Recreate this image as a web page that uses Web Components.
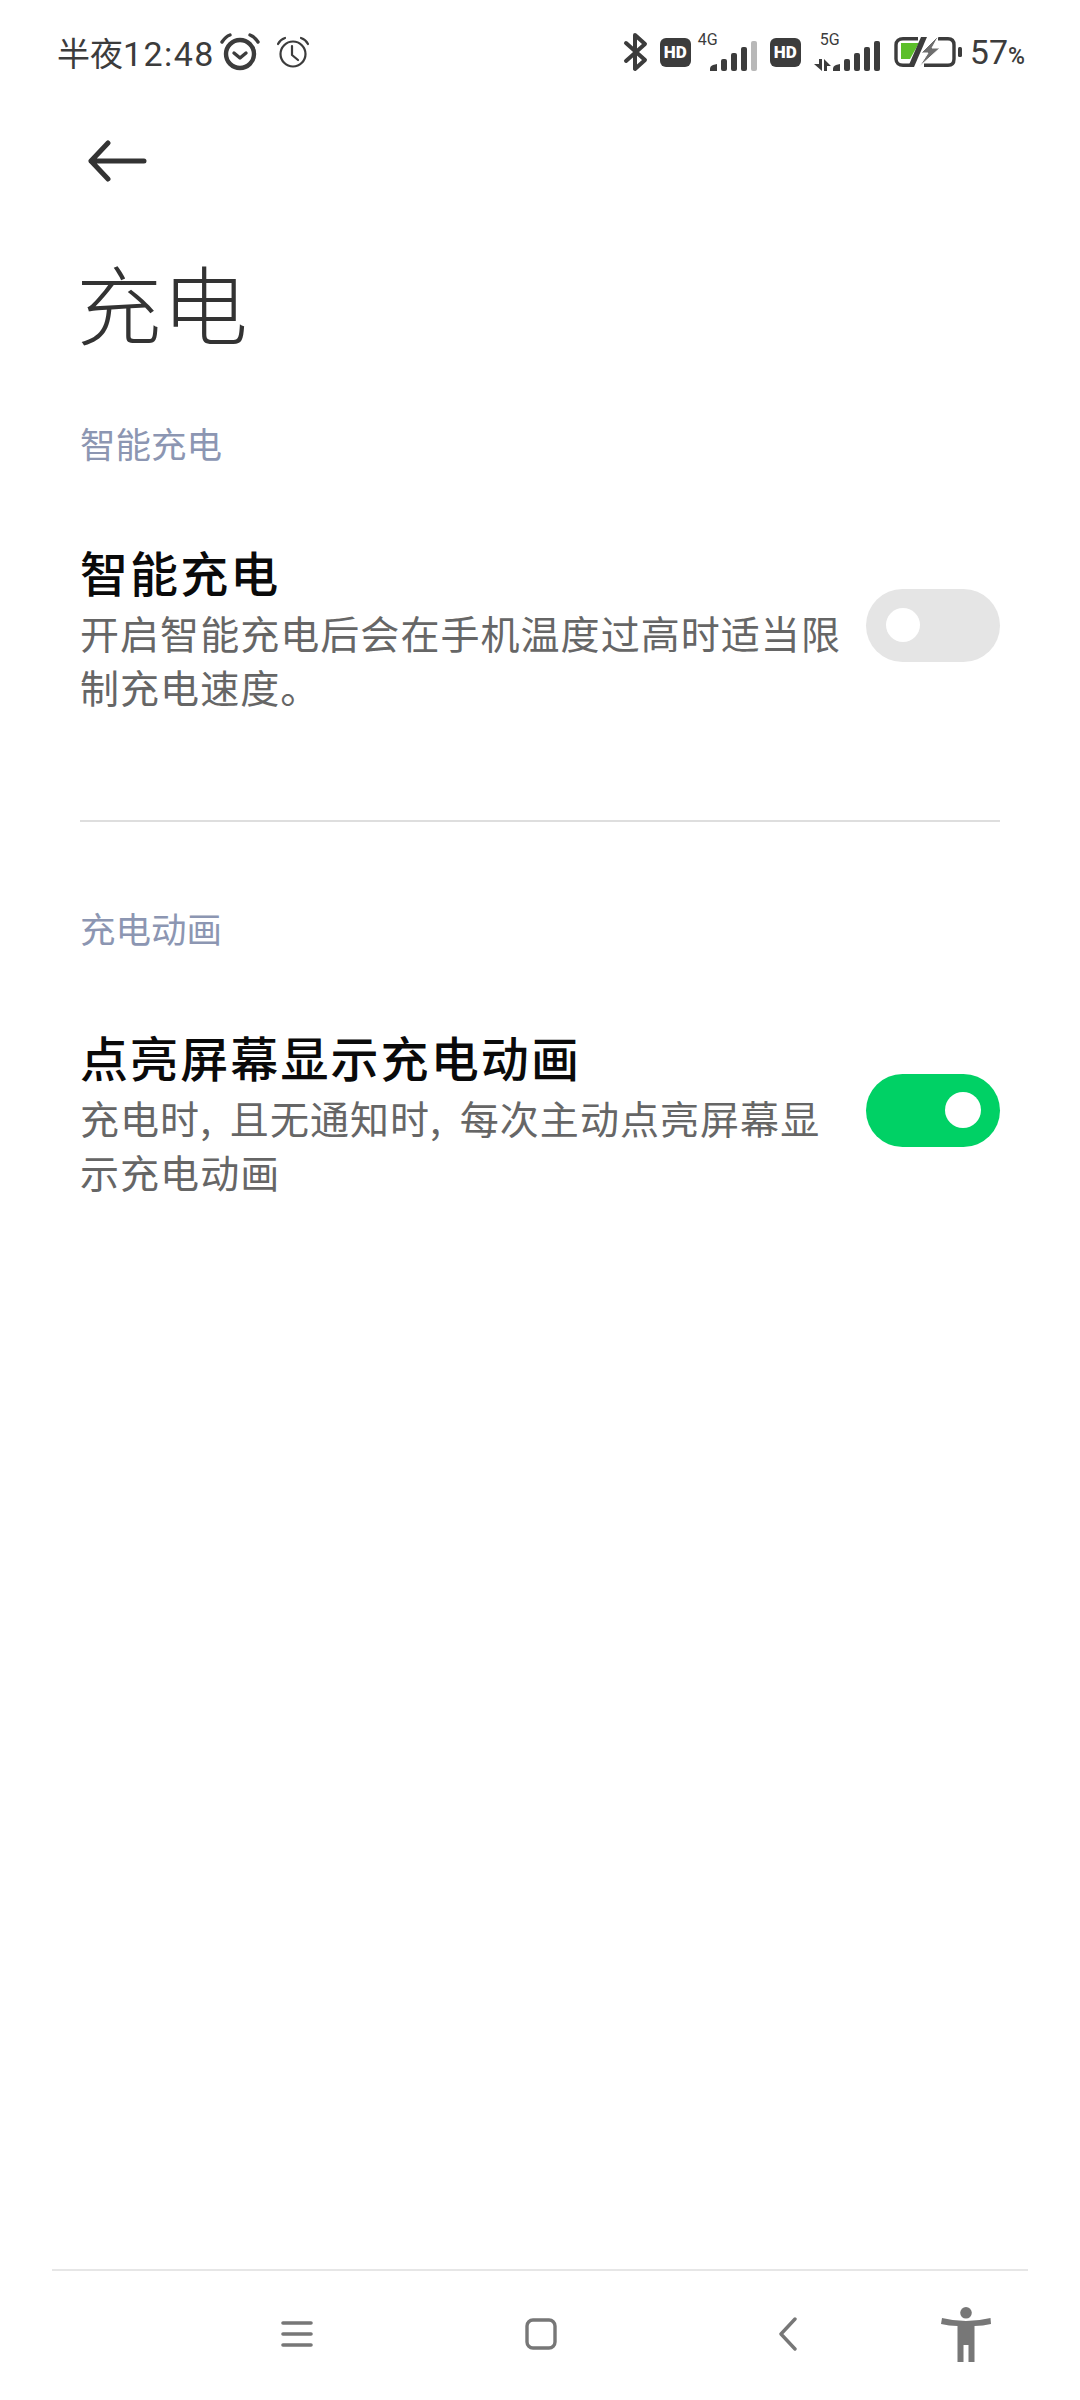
<!DOCTYPE html>
<html>
<head>
<meta charset="utf-8">
<style>
html, body { margin: 0; padding: 0; background: #fff; }
body { width: 1080px; height: 2400px; display: flex; flex-direction: column; font-family: "Noto Sans CJK SC", Roboto, sans-serif; }
</style>
</head>
<body>
<status-bar></status-bar>
<back-header title="充电"></back-header>
<section-title style="margin-top:66px">智能充电</section-title>
<setting-row title="智能充电" style="margin-top:72px">开启智能充电后会在手机温度过高时适当限制充电速度。</setting-row>
<hr-line></hr-line>
<section-title>充电动画</section-title>
<setting-row title="点亮屏幕显示充电动画" checked style="margin-top:72px">充电时, 且无通知时, 每次主动点亮屏幕显示充电动画</setting-row>
<nav-bar></nav-bar>

<script>
class StatusBar extends HTMLElement {
  constructor() {
    super();
    const root = this.attachShadow({ mode: 'open' });
    root.innerHTML = `
<style>
:host { display: flex; align-items: center; height: 104px; padding: 0 55px 0 57px; color: #3c3c3c; box-sizing: border-box; }
.time { font: 400 33px "Noto Sans CJK SC", sans-serif; letter-spacing: 0; }
.time b { font: 400 34px Roboto, sans-serif; letter-spacing: 1.4px; }
svg { display: block; flex: none; }
.left { display: flex; align-items: center; }
.right { display: flex; align-items: center; margin-left: auto; }
.pct { font: 400 34px Roboto, sans-serif; margin-left: 6px; }
.pct small { font-size: 23px; font-weight: 500; }
</style>
<div class="left">
  <span class="time">半夜<b>12:48</b></span>
  <svg width="42" height="40" viewBox="0 0 42 40" style="margin-left:4px" fill="none" stroke="#3c3c3c">
    <circle cx="21" cy="22" r="14" stroke-width="4.4"/>
    <path d="M15 21l6 5 6-5" stroke-width="3.4" stroke-linecap="round" stroke-linejoin="round"/>
    <path d="M3 10C5 7 8 4 11 3M39 10C37 7 34 4 31 3" stroke-width="3.4" stroke-linecap="round"/>
  </svg>
  <svg width="34" height="34" viewBox="0 0 34 34" style="margin-left:15px" fill="none" stroke="#3c3c3c" stroke-width="2.2">
    <circle cx="17" cy="19" r="12.5"/>
    <path d="M16 11v9l6 5" stroke-linecap="round" stroke-linejoin="round"/>
    <path d="M2 9C3 7 6 4 9 3M32 9C31 7 28 4 25 3" stroke-linecap="round"/>
  </svg>
</div>
<div class="right">
  <svg width="26" height="40" viewBox="0 0 26 40" fill="none" stroke="#3c3c3c" stroke-width="4" stroke-linejoin="round" stroke-linecap="round">
    <path d="M3 11L22 28L12 37V3L22 12L3 29"/>
  </svg>
  <hd-badge style="margin-left:11px"></hd-badge>
  <signal-icon label="4G" style="margin-left:7px" last-dim></signal-icon>
  <hd-badge style="margin-left:12px"></hd-badge>
  <signal-icon label="5G" style="margin-left:12px" arrows></signal-icon>
  <svg width="70" height="34" viewBox="0 0 70 34" style="margin-left:13px" fill="none">
    <path d="M24 3.7H9C5 3.7 2 6 2 10V24C2 28 5 30.3 9 30.3H19M44 3.7H54C58 3.7 60 6 60 10V24C60 28 58 30.3 54 30.3H30" stroke="#3c3c3c" stroke-width="3.4"/>
    <path d="M7 8H25L16 24H7Z" fill="#5cbf2a"/>
    <path d="M27 2H33L20 32H14Z" fill="#3c3c3c"/>
    <path d="M43 2L27 18H34L25 32L46 13H38L44 2Z" fill="#6e6e6e" stroke="#fff" stroke-width="1"/>
    <rect x="64" y="12" width="4" height="10" rx="1.5" fill="#3c3c3c"/>
  </svg>
  <span class="pct">57<small>%</small></span>
</div>`;
  }
}

class HdBadge extends HTMLElement {
  constructor() {
    super();
    const root = this.attachShadow({ mode: 'open' });
    root.innerHTML = `
<style>
:host { display: flex; align-items: center; justify-content: center; width: 31px; height: 29px; border-radius: 6px; background: #3c3c3c; color: #fff; font: 900 17px Roboto, sans-serif; }
</style>HD`;
  }
}

class SignalIcon extends HTMLElement {
  constructor() {
    super();
    const root = this.attachShadow({ mode: 'open' });
    const dim = this.hasAttribute('last-dim');
    const arrows = this.hasAttribute('arrows');
    root.innerHTML = `
<style>
:host { display: flex; position: relative; height: 38px; width: ${arrows ? 68 : 60}px; color: #3c3c3c; }
svg { position: absolute; right: 0; bottom: 0; }
span { position: absolute; top: -3px; left: ${arrows ? 7 : 0}px; font: 400 16px Roboto, sans-serif; }
</style>
<span>${this.getAttribute('label')}</span>
<svg width="${arrows ? 68 : 48}" height="30" viewBox="0 0 ${arrows ? 68 : 48} 30" fill="#3c3c3c">
  ${arrows ? '<path d="M6 18h3v12L1 23h5zM11 18l7 7h-4v5h-3z"/>' : ''}
  <g transform="translate(${arrows ? 20 : 0} 0)">
    <path d="M0 28Q0 25 3 24L7 23V30H0Z"/>
    <rect x="11" y="18" width="6" height="12" rx="2"/>
    <rect x="21" y="12" width="6" height="18" rx="2"/>
    <rect x="31" y="6" width="6" height="24" rx="2"/>
    <rect x="41" y="0" width="6" height="30" rx="2" fill="${dim ? '#b8b8b8' : '#3c3c3c'}"/>
  </g>
</svg>`;
  }
}

class BackHeader extends HTMLElement {
  constructor() {
    super();
    const root = this.attachShadow({ mode: 'open' });
    root.innerHTML = `
<style>
:host { display: block; padding: 0 80px; }
svg { display: block; margin-left: 8px; margin-top: 36px; }
h1 { margin: 70px 0 0 -4px; font: 300 86px/100px "Noto Sans CJK SC", sans-serif; color: #333; }
</style>
<svg width="60" height="42" viewBox="0 0 60 42" fill="none" stroke="#333" stroke-width="5" stroke-linecap="round" stroke-linejoin="round">
  <path d="M56 21H3M20 3L3 21L20 39"/>
</svg>
<h1>${this.getAttribute('title')}</h1>`;
  }
}

class SectionTitle extends HTMLElement {
  constructor() {
    super();
    const root = this.attachShadow({ mode: 'open' });
    root.innerHTML = `
<style>
:host { display: block; padding: 0 80px; font: 400 35.5px/50px "Noto Sans CJK SC", sans-serif; color: #8c96b2; }
</style><slot></slot>`;
  }
}

class SettingRow extends HTMLElement {
  constructor() {
    super();
    const root = this.attachShadow({ mode: 'open' });
    root.innerHTML = `
<style>
:host { display: flex; align-items: center; padding: 0 80px; }
.text { width: 767px; flex: none; }
.title { font: 500 48px/62px "Noto Sans CJK SC", sans-serif; letter-spacing: 2.1px; color: #0a0a0a; padding-bottom: 3px; }
.desc { font: 400 39px/54px "Noto Sans CJK SC", sans-serif; letter-spacing: 1.05px; word-spacing: 8px; color: #666; }
toggle-switch { margin-left: auto; margin-bottom: 3px; }
</style>
<div class="text">
  <div class="title">${this.getAttribute('title')}</div>
  <div class="desc"><slot></slot></div>
</div>
<toggle-switch ${this.hasAttribute('checked') ? 'checked' : ''}></toggle-switch>`;
  }
}

class ToggleSwitch extends HTMLElement {
  constructor() {
    super();
    const root = this.attachShadow({ mode: 'open' });
    root.innerHTML = `
<style>
:host { display: flex; align-items: center; flex: none; width: 134px; height: 73px; border-radius: 37px; background: #e5e5e5; padding: 0 20px; box-sizing: border-box; }
:host([checked]) { background: #00d165; justify-content: flex-end; padding-right: 19px; }
i { display: block; width: 34px; height: 34px; border-radius: 50%; background: #fff; }
:host([checked]) i { width: 36px; height: 36px; }
</style><i></i>`;
  }
}

class HrLine extends HTMLElement {
  constructor() {
    super();
    const root = this.attachShadow({ mode: 'open' });
    root.innerHTML = `
<style>
:host { display: block; height: 2px; margin: 107px 80px 81px 80px; background: #dedede; }
</style>`;
  }
}

class NavBar extends HTMLElement {
  constructor() {
    super();
    const root = this.attachShadow({ mode: 'open' });
    root.innerHTML = `
<style>
:host { display: block; margin: auto 52px 0; height: 131px; border-top: 2px solid #e6e6e6; box-sizing: border-box; }
.icons { display: flex; align-items: center; height: 126px; padding-left: 229px; }
svg { display: block; flex: none; }
</style>
<div class="icons">
  <svg width="32" height="28" viewBox="0 0 32 28" fill="none" stroke="#777" stroke-width="3.6" stroke-linecap="round">
    <path d="M2 3H30M2 14H30M2 25H30"/>
  </svg>
  <svg width="32" height="32" viewBox="0 0 32 32" fill="none" stroke="#777" stroke-width="3.4" style="margin-left:212px">
    <rect x="2" y="2" width="28" height="28" rx="6"/>
  </svg>
  <svg width="20" height="34" viewBox="0 0 20 34" fill="none" stroke="#777" stroke-width="3.4" stroke-linecap="round" stroke-linejoin="round" style="margin-left:220px">
    <path d="M18 2L4 17L18 32"/>
  </svg>
  <svg width="50" height="55" viewBox="0 0 50 55" fill="#777" style="margin-left:144px">
    <circle cx="25" cy="5.8" r="5.8"/>
    <path d="M1 11Q13 14 25 14Q37 14 49.500 11L50 17Q42 19 33.500 19V55H27.500V38H22.500V55H16.500V19Q8 19 0 17Z"/>
  </svg>
</div>`;
  }
}

customElements.define('status-bar', StatusBar);
customElements.define('hd-badge', HdBadge);
customElements.define('signal-icon', SignalIcon);
customElements.define('back-header', BackHeader);
customElements.define('section-title', SectionTitle);
customElements.define('setting-row', SettingRow);
customElements.define('toggle-switch', ToggleSwitch);
customElements.define('hr-line', HrLine);
customElements.define('nav-bar', NavBar);
</script>
</body>
</html>
